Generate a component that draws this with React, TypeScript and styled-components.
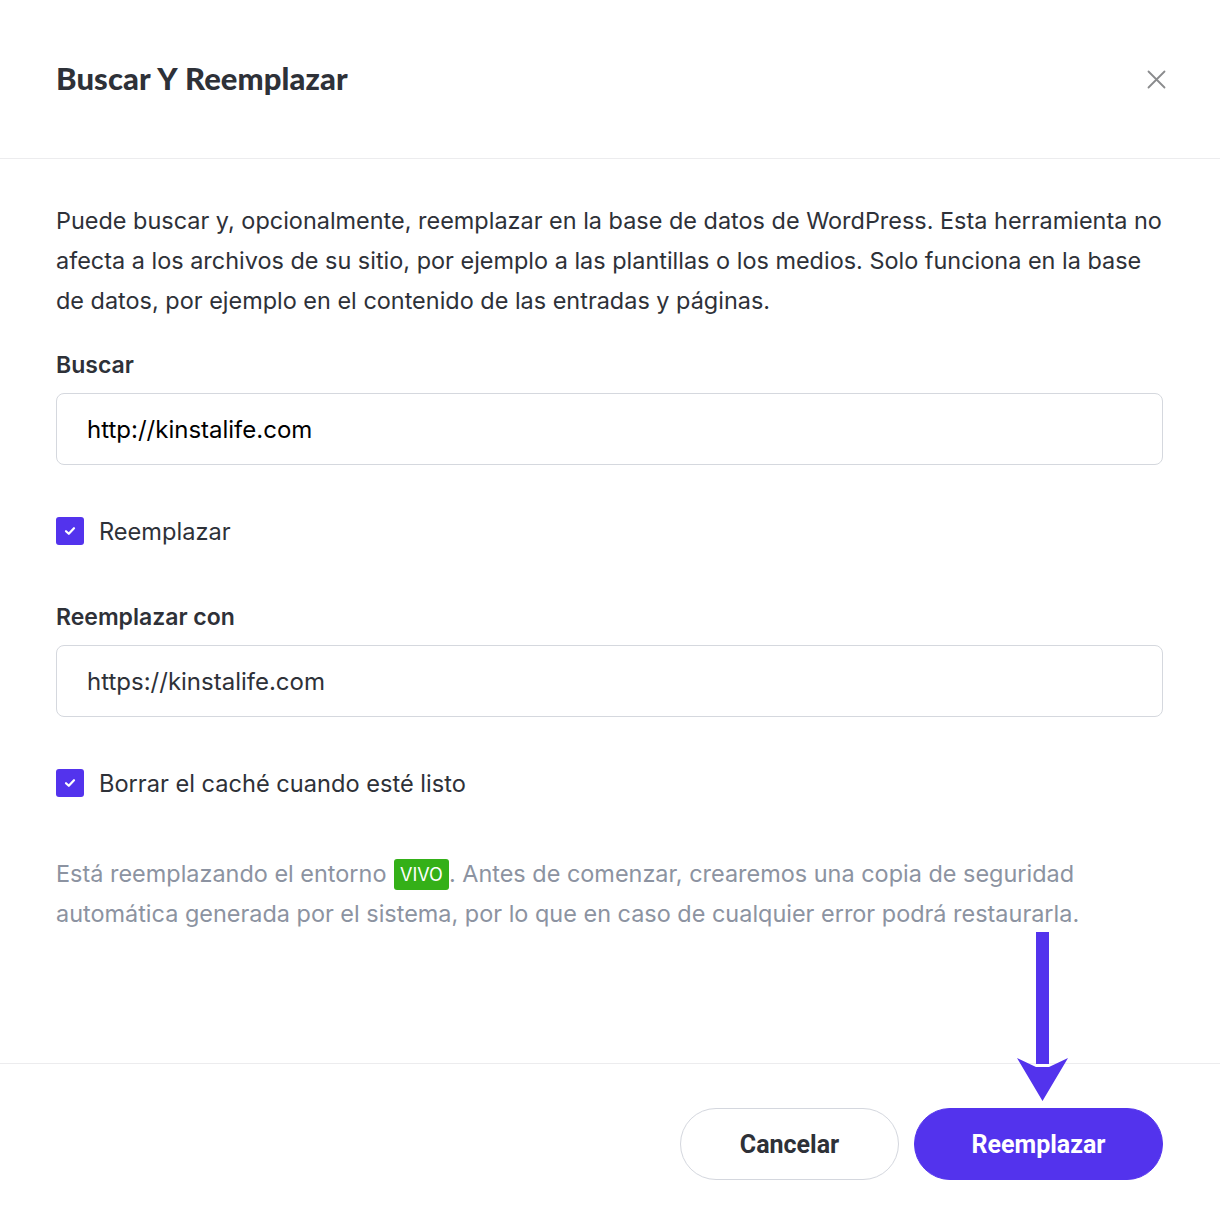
import styled, { createGlobalStyle } from "styled-components";

const GlobalStyle = createGlobalStyle`
    html, body {
        margin: 0;
        padding: 0;
        background: #ffffff;
    }
    * {
        box-sizing: border-box;
    }
`

const Modal = styled.div`
    position: relative;
    width: 1220px;
    height: 1220px;
    display: flex;
    flex-direction: column;
    background: #ffffff;
    font-family: Inter, Roboto, "Liberation Sans", sans-serif;
    color: #2e3138;
`

const Header = styled.div`
    height: 159px;
    padding: 0 52px 0 56px;
    border-bottom: solid 1px #ececee;
    display: flex;
    align-items: center;
    justify-content: space-between;
`

const Title = styled.h1`
    margin: 0;
    font-family: Lato, "Noto Sans", sans-serif;
    font-size: 31px;
    font-weight: 900;
    color: #2e3138;
    letter-spacing: 0.1px;
    word-spacing: 1px;
    padding-bottom: 2px;
`

const CloseButton = styled.div`
    width: 24px;
    height: 24px;
    display: flex;
    align-items: center;
    justify-content: center;
    cursor: pointer;
`

const Body = styled.div`
    flex: 1;
    padding: 42px 57px 0 56px;
    display: flex;
    flex-direction: column;
`

const Intro = styled.p`
    margin: 0;
    font-size: 23.45px;
    line-height: 40px;
    color: #2e3138;
`

const Label = styled.div<{ $top: number }>`
    margin-top: ${p => p.$top}px;
    font-size: 23px;
    font-weight: 600;
    line-height: 32px;
    color: #2e3138;
`

const Input = styled.div<{ $dark?: boolean }>`
    margin-top: 12px;
    height: 72px;
    border: solid 1px #d5d8de;
    border-radius: 8px;
    padding: 0 30px;
    display: flex;
    align-items: center;
    font-size: 24px;
    color: ${p => p.$dark ? '#000000' : '#2e3138'};
`

const CheckRow = styled.div`
    margin-top: 52px;
    display: flex;
    align-items: center;
    gap: 15px;
    height: 28px;
`

const CheckBox = styled.div`
    width: 28px;
    height: 28px;
    border-radius: 3px;
    background: #5333ed;
    display: flex;
    align-items: center;
    justify-content: center;
`

const CheckLabel = styled.span`
    font-size: 23.6px;
    color: #2e3138;
`

const Note = styled.p`
    margin: 57px 0 0;
    font-size: 23.45px;
    line-height: 40px;
    color: #8c93a1;
`

const Badge = styled.span`
    display: inline-block;
    background: #34b018;
    color: #ffffff;
    font-size: 18px;
    line-height: 31px;
    height: 31px;
    padding: 0 6px;
    border-radius: 3px;
    vertical-align: 1px;
    margin-left: 1px;
`

const Footer = styled.div`
    height: 157px;
    border-top: solid 1px #ececee;
    padding: 44px 57px 0 56px;
    display: flex;
    justify-content: flex-end;
    gap: 15px;
`

const Button = styled.button<{ $primary?: boolean; $width: number }>`
    width: ${p => p.$width}px;
    height: 72px;
    border-radius: 36px;
    border: solid 1px ${p => p.$primary ? '#5333ed' : '#d4d7de'};
    background: ${p => p.$primary ? '#5333ed' : '#ffffff'};
    color: ${p => p.$primary ? '#ffffff' : '#2e3138'};
    font-family: Roboto, "Liberation Sans", sans-serif;
    font-size: 25px;
    font-weight: 700;
    cursor: pointer;
    padding: 0;
`

const Arrow = styled.svg`
    position: absolute;
    left: 1017px;
    top: 932px;
`

function Check() {
    return (
        <svg width="12" height="10" viewBox="0 0 12 10">
            <path d="M2 5.2 L4.8 7.8 L10 2.2" fill="none" stroke="#ffffff" strokeWidth="2.2" strokeLinecap="round" strokeLinejoin="round" />
        </svg>
    )
}

export default function App() {
    return (
        <Modal>
            <GlobalStyle />
            <Header>
                <Title>Buscar Y Reemplazar</Title>
                <CloseButton>
                    <svg width="19" height="19" viewBox="0 0 19 19">
                        <path d="M1.5 1.5 L17.5 17.5 M17.5 1.5 L1.5 17.5" stroke="#8a8b8d" strokeWidth="1.8" strokeLinecap="round" />
                    </svg>
                </CloseButton>
            </Header>

            <Body>
                <Intro>
                    Puede buscar y, opcionalmente, reemplazar en la base de datos de WordPress. Esta herramienta no afecta a los archivos de su sitio, por ejemplo a las plantillas o los medios. Solo funciona en la base de datos, por ejemplo en el contenido de las entradas y páginas.
                </Intro>

                <Label $top={28}>Buscar</Label>
                <Input $dark>http://kinstalife.com</Input>

                <CheckRow>
                    <CheckBox><Check /></CheckBox>
                    <CheckLabel>Reemplazar</CheckLabel>
                </CheckRow>

                <Label $top={56}>Reemplazar con</Label>
                <Input>https://kinstalife.com</Input>

                <CheckRow>
                    <CheckBox><Check /></CheckBox>
                    <CheckLabel>Borrar el caché cuando esté listo</CheckLabel>
                </CheckRow>

                <Note>
                    Está reemplazando el entorno <Badge>VIVO</Badge>. Antes de comenzar, crearemos una copia de seguridad automática generada por el sistema, por lo que en caso de cualquier error podrá restaurarla.
                </Note>
            </Body>

            <Footer>
                <Button $width={219}>Cancelar</Button>
                <Button $primary $width={249}>Reemplazar</Button>
            </Footer>

            <Arrow width="52" height="170" viewBox="0 0 52 170">
                <rect x="19" y="0" width="13" height="132" fill="#5333ed" />
                <path d="M0 126 L19 135 L32 135 L51 126 L25.5 169 Z" fill="#5333ed" />
            </Arrow>
        </Modal>
    )
}
